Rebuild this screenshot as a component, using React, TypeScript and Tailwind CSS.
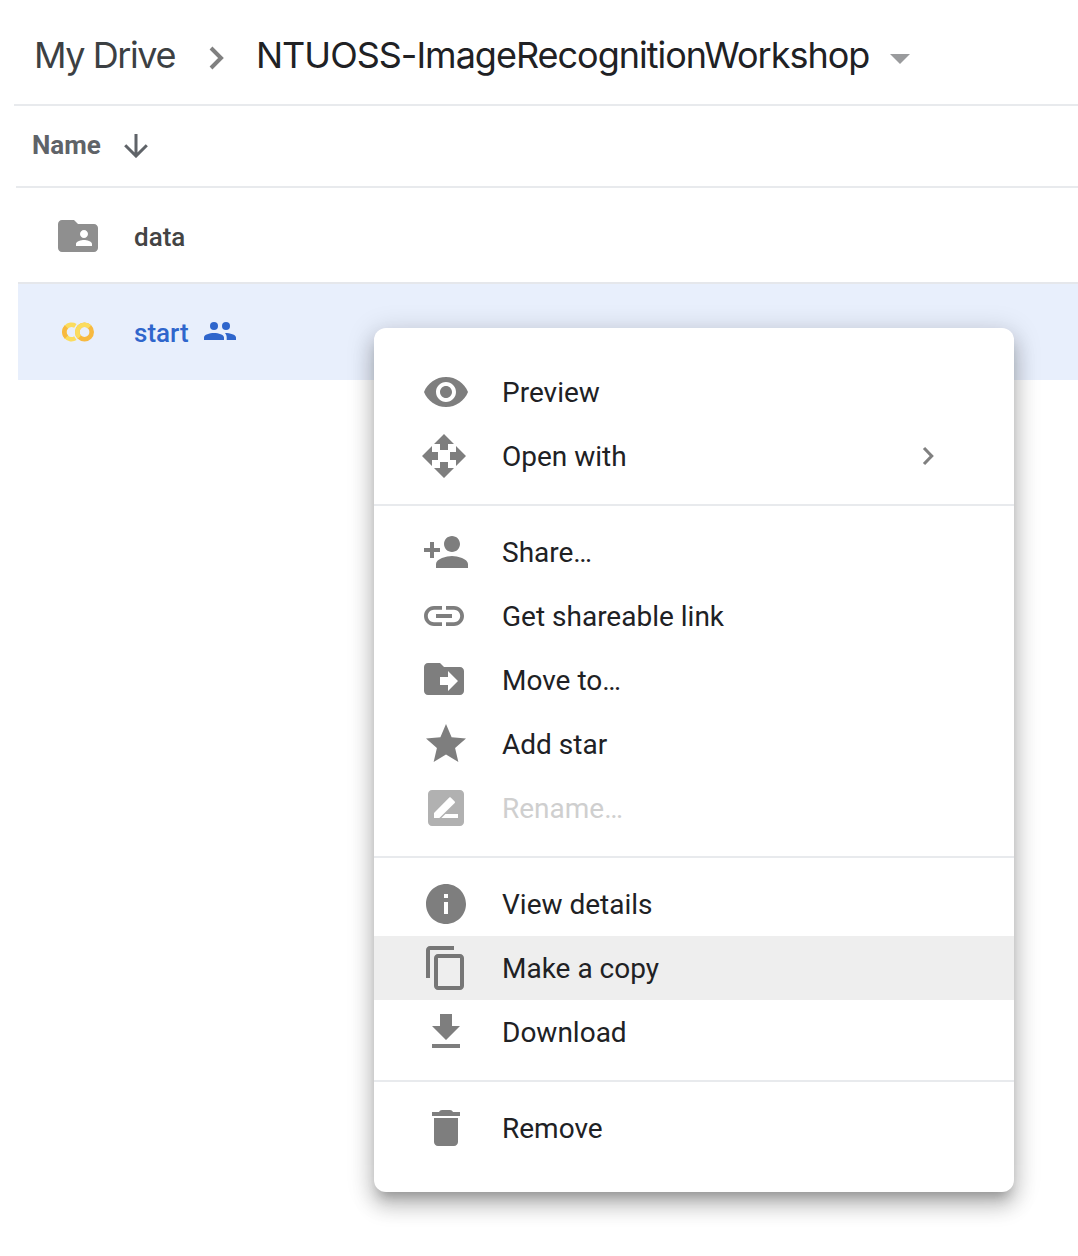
import type { ReactNode } from "react";

const icons: Record<string, string> = {
  preview:
    "M12 4.5C7 4.5 2.73 7.61 1 12c1.73 4.39 6 7.5 11 7.5s9.27-3.11 11-7.5c-1.73-4.39-6-7.5-11-7.5zM12 17c-2.76 0-5-2.24-5-5s2.24-5 5-5 5 2.24 5 5-2.24 5-5 5zm0-8c-1.66 0-3 1.34-3 3s1.34 3 3 3 3-1.34 3-3-1.34-3-3-3z",
  openWith:
    "M13 9h-4V6H6l5-5 5 5h-3v3zM8 10v4H5v3l-5-5 5-5v3h3zM22 12l-5-5v3h-3v4h3v3l5-5zM13 15h-4v3H6l5 5 5-5h-3v-3z",
  share:
    "M15 12c2.21 0 4-1.79 4-4s-1.79-4-4-4-4 1.79-4 4 1.79 4 4 4zM6 10V7H4v3H1v2h3v3h2v-3h3v-2H6zm9 4c-2.67 0-8 1.34-8 4v2h16v-2c0-2.66-5.33-4-8-4z",
  link: "M3.9 12c0-1.71 1.39-3.1 3.1-3.1h4V7H7c-2.76 0-5 2.24-5 5s2.24 5 5 5h4v-1.9H7c-1.71 0-3.1-1.39-3.1-3.1zM8 13h8v-2H8v2zm9-6h-4v1.9h4c1.71 0 3.1 1.39 3.1 3.1s-1.39 3.1-3.1 3.1h-4V17h4c2.76 0 5-2.24 5-5s-2.24-5-5-5z",
  move: "M20 6h-8l-2-2H4c-1.1 0-2 .9-2 2v12c0 1.1.9 2 2 2h16c1.1 0 2-.9 2-2V8c0-1.1-.9-2-2-2zm-6 12v-3h-4v-4h4V8l5 5-5 5z",
  star: "M12 17.27L18.18 21l-1.64-7.03L22 9.24l-7.19-.61L12 2 9.19 8.63 2 9.24l5.46 4.73L5.82 21z",
  rename:
    "M19 3H5c-1.1 0-2 .9-2 2v14c0 1.1.9 2 2 2h14c1.1 0 2-.9 2-2V5c0-1.1-.9-2-2-2zM6 17v-2.5l7.65-7.7c.2-.2.51-.2.71 0l2 2c.2.2.2.51 0 .71L8.7 17H6zm12 0H9.7l2-2H18v2z",
  info: "M12 2C6.48 2 2 6.48 2 12s4.48 10 10 10 10-4.48 10-10S17.52 2 12 2zm1 15h-2v-6h2v6zm0-8h-2V7h2v2z",
  copy: "M16 1H4c-1.1 0-2 .9-2 2v14h2V3h12V1zm3 4H8c-1.1 0-2 .9-2 2v14c0 1.1.9 2 2 2h11c1.1 0 2-.9 2-2V7c0-1.1-.9-2-2-2zm0 16H8V7h11v14z",
  download: "M19 9h-4V3H9v6H5l7 7 7-7zM5 18v2h14v-2H5z",
  remove:
    "M6 19c0 1.1.9 2 2 2h8c1.1 0 2-.9 2-2V7H6v12zM19 4h-3.5c-.3-.6-.8-1-1.5-1h-4c-.7 0-1.2.4-1.5 1H5v2h14V4z",
};

type Item = {
  icon: string;
  label: string;
  nudge?: string;
  disabled?: boolean;
  active?: boolean;
  submenu?: boolean;
};

const groups: Item[][] = [
  [
    { icon: "preview", label: "Preview" },
    { icon: "openWith", label: "Open with", submenu: true },
  ],
  [
    { icon: "share", label: "Share…" },
    { icon: "link", label: "Get shareable link", nudge: "-ml-0.5 mr-0.5" },
    { icon: "move", label: "Move to…", nudge: "-ml-0.5 mr-0.5 -mt-0.5" },
    { icon: "star", label: "Add star" },
    { icon: "rename", label: "Rename…", disabled: true },
  ],
  [
    { icon: "info", label: "View details" },
    { icon: "copy", label: "Make a copy", active: true },
    { icon: "download", label: "Download" },
  ],
  [{ icon: "remove", label: "Remove" }],
];

function MenuItem({ item }: { item: Item }) {
  return (
    <div className={`flex h-16 items-center pl-12 ${item.active ? "bg-[#eeeeee]" : ""}`}>
      <svg
        viewBox="0 0 24 24"
        className={`size-12 shrink-0 overflow-visible ${item.nudge ?? ""} ${item.disabled ? "opacity-30" : "opacity-50"}`}
      >
        <path d={icons[item.icon]} />
      </svg>
      <span
        className={`mt-0.5 ml-8 flex-1 text-[28px] leading-8 whitespace-nowrap ${item.disabled ? "text-[#cfcfcf]" : "text-[#202124]"}`}
      >
        {item.label}
      </span>
      {item.submenu && (
        <svg viewBox="0 0 12 20" className="mr-20 h-5 w-3" fill="none" stroke="#808080" strokeWidth="3.1">
          <path d="M2 2l7.7 8L2 18" />
        </svg>
      )}
    </div>
  );
}

function ContextMenu() {
  return (
    <div className="absolute top-[328px] left-[374px] w-[640px] rounded-xl bg-white py-4 shadow-[0_10px_12px_-6px_rgba(0,0,0,0.24),0_14px_20px_2px_rgba(0,0,0,0.17),0_4px_26px_4px_rgba(0,0,0,0.13)]">
      {groups.map((group, i) => (
        <div key={i} className={i > 0 ? "border-t-2 border-[#e8eaed] pt-3.5 pb-4" : "py-4"}>
          {group.map((item) => (
            <MenuItem key={item.label} item={item} />
          ))}
        </div>
      ))}
    </div>
  );
}

function FileRow({ icon, children, className }: { icon: ReactNode; children: ReactNode; className: string }) {
  return (
    <div className={`ml-[18px] flex items-center pl-9 text-[26px] font-medium ${className}`}>
      <div className="flex w-12 justify-center">{icon}</div>
      <div className="mt-0.5 ml-8 flex items-center">{children}</div>
    </div>
  );
}

export default function App() {
  return (
    <div className="relative h-[1256px] w-[1078px] overflow-hidden bg-white font-[Roboto,sans-serif]">
      <header className="ml-3.5 flex h-[106px] items-center border-b-2 border-[#e8eaed] pl-5 font-[Inter,sans-serif] text-[36px] whitespace-nowrap">
        <span className="mt-1.5 w-[175px] tracking-[-1.42px] text-[#3c4043]">My Drive</span>
        <svg viewBox="0 0 16 24" className="mt-3 h-6 w-4" fill="none" stroke="#808080" strokeWidth="4">
          <path d="M2 2l10 10L2 22" />
        </svg>
        <span className="mt-1.5 ml-[31px] w-[634px] tracking-[-1px] text-[#202124]">
          NTUOSS-ImageRecognitionWorkshop
        </span>
        <svg viewBox="0 0 20 10" className="mt-3.5 h-2.5 w-5" fill="#9a9b9d">
          <path d="M0 0h20L10 10z" />
        </svg>
      </header>

      <div className="ml-4 flex h-[82px] items-center border-b-2 border-[#e8eaed] pl-4 text-[26px] font-bold text-[#5f6368]">
        <span className="-mt-0.5">Name</span>
        <svg viewBox="0 0 24 24" className="ml-[23px] size-6" fill="none" stroke="#5f6368" strokeWidth="3">
          <path d="M12 0v22M1.2 11.2L12 22l10.8-10.8" />
        </svg>
      </div>

      <FileRow
        className="h-24 border-b-2 border-[#e5e7eb] pt-0.5 text-[#444444]"
        icon={
          <svg viewBox="0 0 24 24" className="size-12 fill-[#8f8f8f]">
            <path d="M20 6h-8l-2-2H4c-1.1 0-1.99.9-1.99 2L2 18c0 1.1.9 2 2 2h16c1.1 0 2-.9 2-2V8c0-1.1-.9-2-2-2zm-5 3c1.1 0 2 .9 2 2s-.9 2-2 2-2-.9-2-2 .9-2 2-2zm4 8h-8v-1c0-1.33 2.67-2 4-2s4 .67 4 2v1z" />
          </svg>
        }
      >
        data
      </FileRow>
      <FileRow
        className="h-24 bg-[#e8effc] text-[#2f66cc]"
        icon={
          <svg viewBox="0 0 32 20" className="h-5 w-8" fill="none" strokeWidth="4.6">
            <path d="M13.4 3.9A7.200 7.200 0 1 0 13.4 16.1" stroke="#fbdc5e" />
            <path d="M4.4 4.9A7.200 7.200 0 0 0 4.4 15.1" stroke="#f7b940" />
            <circle cx="22.5" cy="10" r="7.2" stroke="#e8effc" strokeWidth="6.2" />
            <circle cx="22.5" cy="10" r="7.2" stroke="#f7b940" />
            <path d="M17.4 15.1A7.200 7.200 0 0 1 27.6 4.9" stroke="#fbdc5e" />
          </svg>
        }
      >
        start
        <svg viewBox="0 0 32 18" className="-mt-1 ml-[15px] h-[18px] w-8" fill="#2f66cc">
          <circle cx="10" cy="4" r="4" />
          <circle cx="22" cy="4" r="4" />
          <path d="M0 18v-2.5C0 12.5 5.5 11 10 11s10 1.500 10 4.500V18zM21 11c5 0 11 1.500 11 4.500V18h-9.300v-2.500c0-2-.7-3.300-1.700-4.500z" />
        </svg>
      </FileRow>

      <ContextMenu />
    </div>
  );
}
